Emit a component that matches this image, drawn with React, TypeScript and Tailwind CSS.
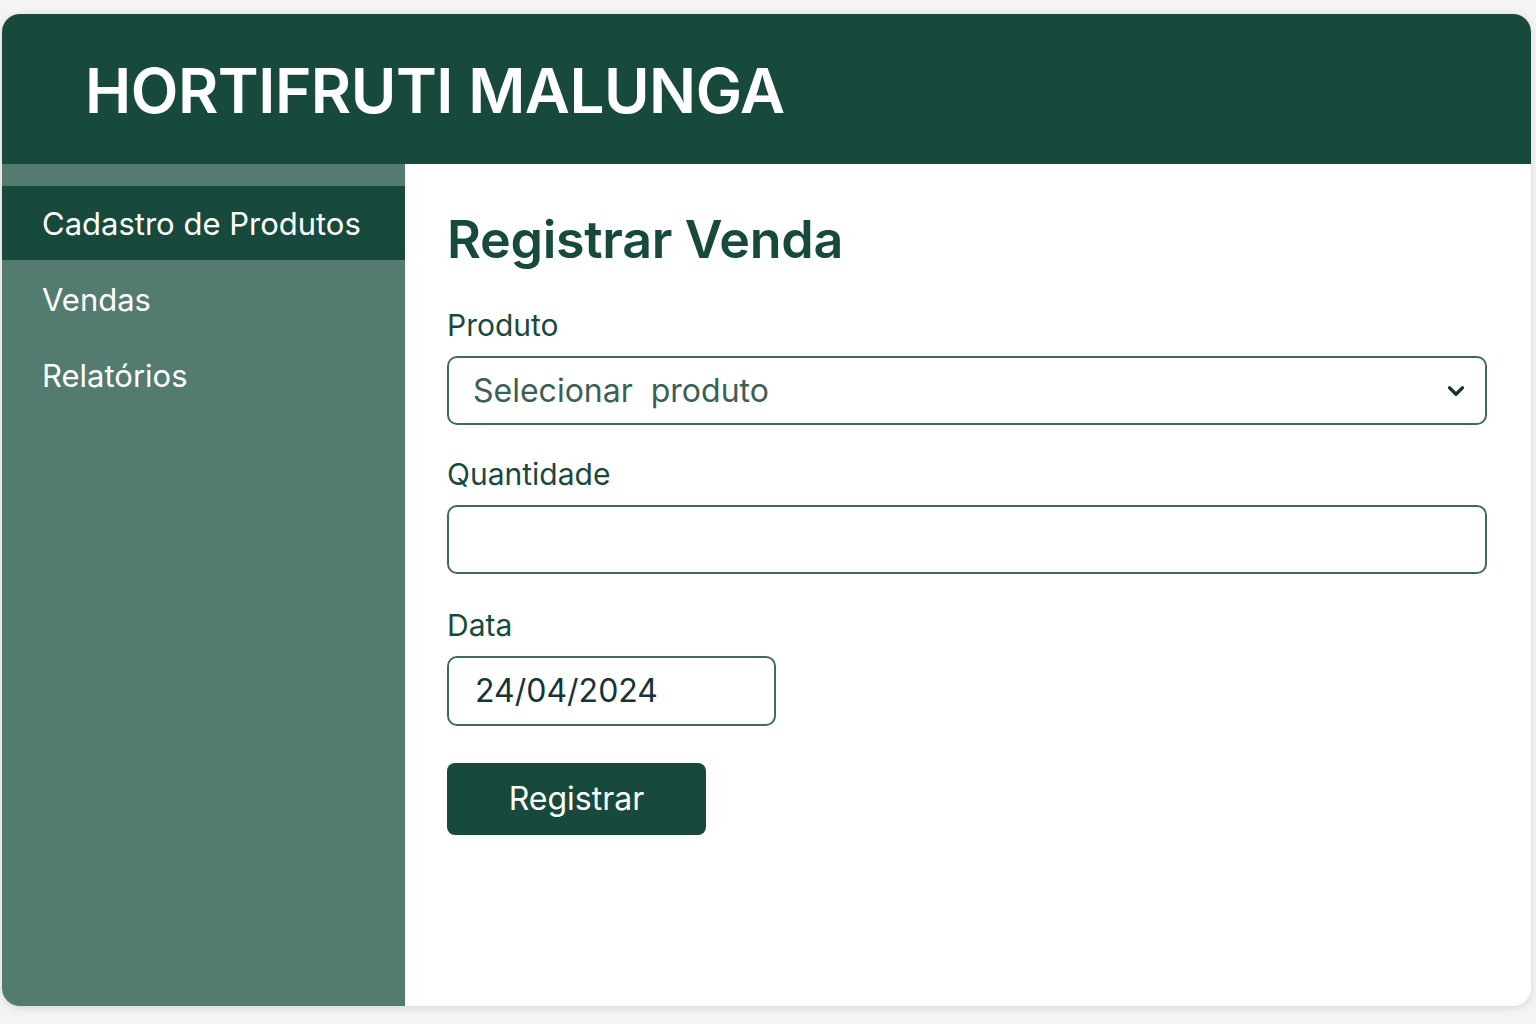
import { ChevronDown } from 'lucide-react';

const menu = [
  { label: 'Cadastro de Produtos', active: true },
  { label: 'Vendas', active: false },
  { label: 'Relatórios', active: false },
];

export default function App() {
  return (
    <div className="min-h-screen w-full bg-[#f4f4f3] px-[2px] pt-[14px] pb-[18px] font-['Inter',sans-serif]">
      <div className="flex h-[992px] w-[1529px] flex-col overflow-hidden rounded-[18px] bg-white shadow-[0_2px_8px_rgba(0,0,0,0.12)]">
        {/* Header */}
        <header className="flex h-[150px] shrink-0 items-center bg-[#174a3c] pl-[83px] pt-[4px]">
          <h1 className="text-[62px] font-semibold leading-none tracking-[-0.5px] text-white">HORTIFRUTI MALUNGA</h1>
        </header>

        <div className="flex flex-1">
          {/* Sidebar */}
          <aside className="w-[403px] shrink-0 bg-[#537b70] pt-[22px]">
            {menu.map((item) => (
              <div
                key={item.label}
                className={
                  item.active
                    ? 'flex h-[74px] items-center bg-[#174a3c] pl-[40px] pt-[2px] text-[31px] text-white'
                    : 'flex h-[76px] items-center pl-[40px] pt-[4px] text-[31px] text-white'
                }
              >
                {item.label}
              </div>
            ))}
          </aside>

          {/* Main */}
          <main className="flex-1 pl-[42px] pr-[44px] pt-[50px] text-[#174a3c]">
            <h2 className="text-[52px] font-semibold leading-none tracking-[-0.3px]">Registrar Venda</h2>

            <label className="mt-[44px] block text-[30px] leading-none">Produto</label>
            <div className="mt-[16px] flex h-[69px] items-center justify-between rounded-[10px] border-2 border-[#3f6a62] pl-[24px] pr-[16px]">
              <span className="text-[32px] text-[#3c5f58]">Selecionar&nbsp; produto</span>
              <ChevronDown className="h-[26px] w-[26px] text-[#17333a]" strokeWidth={3} />
            </div>

            <label className="mt-[34px] block text-[30px] leading-none">Quantidade</label>
            <div className="mt-[16px] h-[69px] rounded-[10px] border-2 border-[#3f6a62]" />

            <label className="mt-[36px] block text-[30px] leading-none">Data</label>
            <div className="mt-[16px] flex h-[70px] w-[329px] items-center rounded-[10px] border-2 border-[#3f6a62] pl-[26px] text-[32px] text-[#17333a]">
              24/04/2024
            </div>

            <button className="mt-[37px] flex h-[72px] w-[259px] items-center justify-center rounded-[8px] bg-[#174a3c] text-[32px] text-white">
              Registrar
            </button>
          </main>
        </div>
      </div>
    </div>
  );
}
